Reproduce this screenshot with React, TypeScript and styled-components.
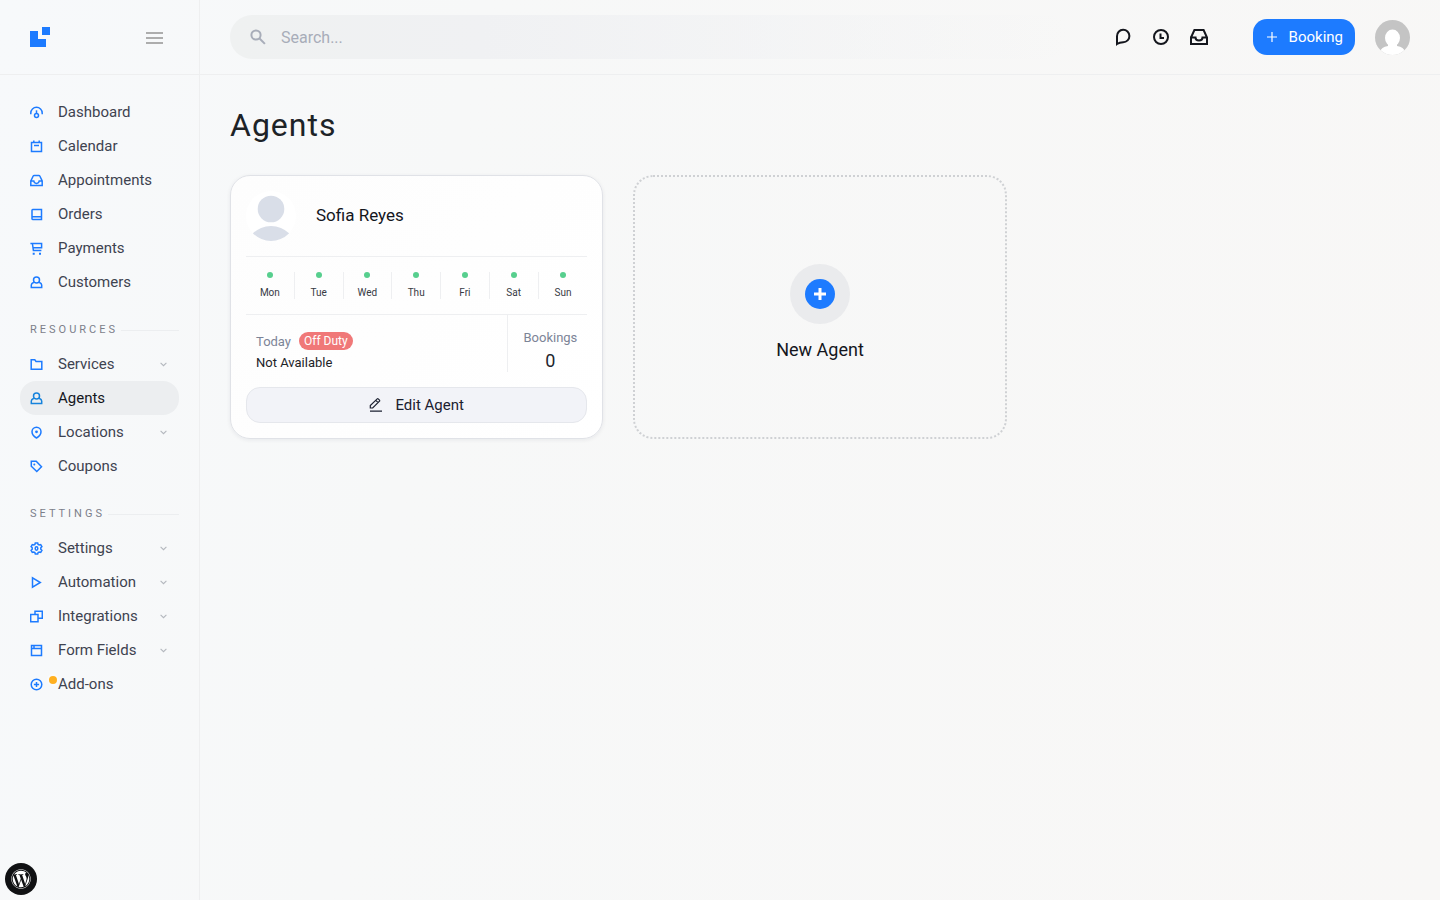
import React from "react";
import styled, { createGlobalStyle } from "styled-components";
import { FaWordpress } from "react-icons/fa";

const GlobalStyle = createGlobalStyle`
  *, *::before, *::after { box-sizing: border-box; }
  html, body, #root { min-height: 100vh; }
  body {
    margin: 0;
    color: #1d2327;
    font-family: Roboto, "Liberation Sans", sans-serif;
    font-size: 14px;
    background: linear-gradient(100deg, #f7f9fb 0%, #f7f8f8 30%, #f8f7f6 100%);
  }
  button, input { font: inherit; color: inherit; }
  button { cursor: pointer; }
  a { color: inherit; text-decoration: none; }
  svg { display: block; flex: none; }
`;

const Shell = styled.div`
  display: flex;
  min-height: 100vh;
`;

const Sidebar = styled.aside`
  flex: none;
  width: 200px;
  border-right: 1px solid #eeeff0;
`;

const Brand = styled.div`
  display: flex;
  align-items: center;
  justify-content: space-between;
  height: 75px;
  padding: 0 35px 0 30px;
  border-bottom: 1px solid #eeeff0;
`;

const IconButton = styled.button`
  display: flex;
  padding: 0;
  border: 0;
  background: none;
`;

const Nav = styled.nav`
  padding: 20px;
`;

const NavList = styled.ul`
  margin: 0;
  padding: 0;
  list-style: none;
`;

const NavLink = styled.a<{ $active?: boolean }>`
  display: flex;
  align-items: center;
  gap: 15px;
  height: 34px;
  padding: 0 12px 0 10px;
  border-radius: 16px;
  font-size: 15px;
  color: ${(p) => (p.$active ? "#14161d" : "#3e4350")};
  background: ${(p) => (p.$active ? "#eceef0" : "transparent")};

  > svg:first-child { color: ${(p) => (p.$active ? "#1683dc" : "#1d7bff")}; }
`;

const NavIconWrap = styled.span`
  position: relative;
  color: #1d7bff;
`;

const NoticeDot = styled.span`
  position: absolute;
  top: -4px;
  left: 17px;
  width: 12px;
  height: 12px;
  border: 2px solid #fafbfc;
  border-radius: 50%;
  background: #ffb020;
`;

const NavLabel = styled.span`
  flex: 1;
`;

const SectionTitle = styled.h2`
  display: flex;
  align-items: center;
  gap: 3px;
  margin: 0;
  padding: 22px 0 8px 10px;
  font-size: 11px;
  line-height: 18px;
  font-weight: 400;
  letter-spacing: 3px;
  text-transform: uppercase;
  color: #7c7f8a;

  &::after {
    content: "";
    flex: 1;
    height: 1px;
    background: #eceef0;
  }
`;

const Main = styled.main`
  flex: 1;
  min-width: 0;
`;

const TopBar = styled.header`
  display: flex;
  align-items: center;
  height: 75px;
  padding: 0 30px;
  border-bottom: 1px solid #eeeff0;
`;

const SearchBox = styled.label`
  flex: 1;
  display: flex;
  align-items: center;
  gap: 15px;
  height: 44px;
  margin-right: 45px;
  padding: 0 20px;
  border-radius: 22px;
  color: #a8adb9;
  background: linear-gradient(to right, #eff1f1, #f0f1f3 30%, rgba(243, 243, 243, 0));
`;

const SearchInput = styled.input`
  flex: 1;
  min-width: 0;
  padding: 0;
  border: 0;
  outline: 0;
  background: none;
  font-size: 16px;
  color: #1d2327;

  &::placeholder { color: #a8adb9; opacity: 1; }
`;

const Actions = styled.div`
  display: flex;
  align-items: center;
  gap: 20px;
  margin-right: 45px;
  color: #14161d;
`;

const BookingButton = styled.button`
  display: flex;
  align-items: center;
  gap: 12px;
  height: 36px;
  margin-right: 20px;
  padding: 0 12px 0 14px;
  border: 0;
  border-radius: 14px;
  font-size: 15px;
  color: #fff;
  background: #1d7bff;
`;

const Content = styled.div`
  padding: 30px;
`;

const PageTitle = styled.h1`
  margin: 0 0 30px;
  font-size: 32px;
  line-height: 40px;
  font-weight: 400;
  letter-spacing: 1px;
`;

const AgentGrid = styled.div`
  display: grid;
  grid-template-columns: repeat(3, 1fr);
  gap: 30px;
`;

const AgentCard = styled.article`
  padding: 15px;
  border: 1px solid #e0e2e7;
  border-radius: 20px;
  background: linear-gradient(315deg, #fff, #fdfdfd);
  box-shadow: 0 1px 4px rgba(20, 30, 60, 0.07);
`;

const AgentHeader = styled.div`
  display: flex;
  align-items: center;
  gap: 20px;
  padding-bottom: 15px;
  border-bottom: 1px solid #eeeff1;
`;

const AgentName = styled.h3`
  margin: 0;
  padding-bottom: 2px;
  font-size: 17px;
  line-height: 24px;
  font-weight: 400;
  color: #14161d;
`;

const Week = styled.ul`
  display: grid;
  grid-template-columns: repeat(7, 1fr);
  margin: 0;
  padding: 15px 0;
  border-bottom: 1px solid #eeeff1;
  list-style: none;
`;

const Day = styled.li`
  display: flex;
  flex-direction: column;
  align-items: center;
  gap: 8px;
  height: 27px;
  font-size: 10px;
  line-height: 14px;
  color: #373a44;

  &:not(:last-child) { border-right: 1px solid #eeeff1; }

  &::before {
    content: "";
    flex: none;
    width: 6px;
    height: 6px;
    border-radius: 50%;
    background: #57cf8e;
  }
`;

const Stats = styled.div`
  display: flex;
  margin-bottom: 15px;
`;

const Today = styled.div`
  flex: 1;
  padding: 17px 10px 0;
  font-size: 13px;
  color: #1d2327;
`;

const TodayRow = styled.div`
  display: flex;
  align-items: center;
  gap: 8px;
  height: 18px;
  color: #7c8497;
`;

const DutyBadge = styled.span`
  padding: 0 5px;
  border-radius: 9px;
  font-size: 12px;
  line-height: 18px;
  color: #fff;
  background: #f07878;
`;

const Availability = styled.div`
  padding-top: 4px;
  font-size: 13px;
  line-height: 18px;
`;

const Bookings = styled.div`
  height: 57px;
  padding: 14px 10px 0 15px;
  border-left: 1px solid #eeeff1;
  text-align: center;
  font-size: 13px;
  line-height: 18px;
  color: #7c8497;
`;

const BookingCount = styled.div`
  padding-top: 2px;
  font-size: 18px;
  line-height: 24px;
  color: #22252e;
`;

const EditButton = styled.button`
  display: flex;
  align-items: center;
  justify-content: center;
  gap: 12px;
  width: 100%;
  height: 36px;
  border: 1px solid #e5e7ec;
  border-radius: 14px;
  font-size: 15px;
  color: #1b2030;
  background: #f2f3f8;
`;

const NewAgentCard = styled.button`
  display: flex;
  flex-direction: column;
  align-items: center;
  justify-content: center;
  gap: 15px;
  padding: 10px 0 0;
  border: 2px dotted #cfd1d4;
  border-radius: 20px;
  font-size: 18px;
  line-height: 22px;
  color: #14161d;
  background: none;
`;

const AdminBadge = styled.a`
  position: fixed;
  left: 5px;
  bottom: 5px;
  display: flex;
  align-items: center;
  justify-content: center;
  width: 32px;
  height: 32px;
  border-radius: 50%;
  color: #fff;
  background: #101113;
`;

const glyphs: Record<string, React.ReactNode> = {
  dashboard: (
    <>
      <path d="M.8 8.2V7a5.7 5.7 0 0 1 11.4 0v1.2" />
      <circle cx="6.5" cy="9.4" r="2" />
      <path d="M6.5 4.3v3.2" />
    </>
  ),
  calendar: <path d="M1.5 2.5h10v9h-10zM3.8.5v2M9.2.5v2M4 5.500h5" />,
  inbox: <path d="M.8 7 3.2 2q.3-.6 1-.6h4.6q.7 0 1 .6l2.4 5v4.6H.8V7h3q.3 2.400 2.700 2.400T9.200 7h3" />,
  orders: <path d="M2.700 1.500h8.800v10H2.700q-.7 0-.7-.8V2.300q0-.8.7-.8M2 8.800h9.500" />,
  cart: (
    <>
      <path d="M.4 1.500h11.200V5.800H3.400M2.400 1.500l1 7h8" />
      <path d="M2.700 11.700h2M9 11.700h2" strokeWidth="2" />
    </>
  ),
  user: (
    <>
      <circle cx="6.5" cy="4" r="3" />
      <path d="M3.900 6.200Q1.300 7.200 1.300 9v2.500h10.400V9q0-1.800-2.600-2.800" />
    </>
  ),
  folder: <path d="M1.2 1.8h3.6L6 3.4h5.8v7.8H1.2z" />,
  pin: (
    <>
      <path d="M6.500 12C4 10.500 2 8.500 2 5.700a4.500 4.500 0 0 1 9 0C11 8.500 9 10.500 6.500 12z" />
      <circle cx="6.5" cy="5.8" r="1.4" fill="currentColor" stroke="none" />
    </>
  ),
  tag: (
    <>
      <path d="M1.300 1.300h4.900l5.300 5.500-4.700 4.700-5.500-5.300z" />
      <circle cx="4.300" cy="4.400" r="1" fill="currentColor" stroke="none" />
    </>
  ),
  gear: (
    <>
      <path d="M5.300.9h2.400l.4 1.500 1.100.6 1.500-.4 1.200 2-1.100 1.100v1.600l1.100 1.100-1.200 2-1.500-.4-1.100.6-.4 1.500H5.300l-.4-1.500-1.100-.6-1.500.4-1.200-2 1.100-1.100V5.700L1.100 4.600l1.200-2 1.500.4 1.100-.6z" />
      <ellipse cx="6.500" cy="6.500" rx="1.300" ry="1.700" />
    </>
  ),
  play: <path d="M2.500 1.900v9.200l7.800-4.600z" />,
  layers: <path d="M.7 4.500h7.300v7.200H.7zM5 4.500V1.300h7.300v7H8" />,
  form: <path d="M1.500 1.500h10v10h-10zM1.500 4.500h10M4 1.500v3" />,
  plus: (
    <>
      <circle cx="6.5" cy="6.5" r="5.3" />
      <path d="M6.500 3.900v5.200M3.900 6.500h5.200" />
    </>
  ),
};

const NavIcon = ({ name }: { name: string }) => (
  <svg width="13" height="13" viewBox="0 0 13 13" fill="none" stroke="currentColor" strokeWidth="1.5" aria-hidden="true">
    {glyphs[name]}
  </svg>
);

const Chevron = () => (
  <svg width="7" height="5" viewBox="0 0 7 5" fill="none" stroke="#b3b7bd" strokeWidth="1.1" aria-hidden="true">
    <path d="M.6.9 3.5 3.7 6.400.9" />
  </svg>
);

interface NavEntry {
  label: string;
  icon: string;
  expandable?: boolean;
  active?: boolean;
  notice?: boolean;
}

const sections: { title?: string; items: NavEntry[] }[] = [
  {
    items: [
      { label: "Dashboard", icon: "dashboard" },
      { label: "Calendar", icon: "calendar" },
      { label: "Appointments", icon: "inbox" },
      { label: "Orders", icon: "orders" },
      { label: "Payments", icon: "cart" },
      { label: "Customers", icon: "user" },
    ],
  },
  {
    title: "Resources",
    items: [
      { label: "Services", icon: "folder", expandable: true },
      { label: "Agents", icon: "user", active: true },
      { label: "Locations", icon: "pin", expandable: true },
      { label: "Coupons", icon: "tag" },
    ],
  },
  {
    title: "Settings",
    items: [
      { label: "Settings", icon: "gear", expandable: true },
      { label: "Automation", icon: "play", expandable: true },
      { label: "Integrations", icon: "layers", expandable: true },
      { label: "Form Fields", icon: "form", expandable: true },
      { label: "Add-ons", icon: "plus", notice: true },
    ],
  },
];

const days = ["Mon", "Tue", "Wed", "Thu", "Fri", "Sat", "Sun"];

export default function App() {
  return (
    <>
      <GlobalStyle />
      <Shell>
        <Sidebar>
          <Brand>
            <a href="#home" aria-label="Home">
              <svg width="20" height="20" viewBox="0 0 20 20" fill="#1d7bff">
                <path d="M0 4h8v8h8v8H0zM12 0h8v8h-8z" />
              </svg>
            </a>
            <IconButton aria-label="Toggle menu">
              <svg width="18" height="14" viewBox="0 0 18 14" stroke="#adadad" strokeWidth="2">
                <path d="M0 3h17M0 8h17M0 13h17" />
              </svg>
            </IconButton>
          </Brand>
          <Nav>
            {sections.map((section, i) => (
              <React.Fragment key={i}>
                {section.title && <SectionTitle>{section.title}</SectionTitle>}
                <NavList>
                  {section.items.map((item) => (
                    <li key={item.label}>
                      <NavLink href={"#" + item.icon} $active={item.active}>
                        {item.notice ? (
                          <NavIconWrap>
                            <NavIcon name={item.icon} />
                            <NoticeDot />
                          </NavIconWrap>
                        ) : (
                          <NavIcon name={item.icon} />
                        )}
                        <NavLabel>{item.label}</NavLabel>
                        {item.expandable && <Chevron />}
                      </NavLink>
                    </li>
                  ))}
                </NavList>
              </React.Fragment>
            ))}
          </Nav>
        </Sidebar>

        <Main>
          <TopBar>
            <SearchBox>
              <svg width="16" height="16" viewBox="0 0 16 16" fill="none" stroke="currentColor" strokeWidth="2">
                <circle cx="6" cy="6" r="4.6" />
                <path d="m9.300 9.300 5.600 5.600" />
              </svg>
              <SearchInput type="text" placeholder="Search..." aria-label="Search" />
            </SearchBox>
            <Actions>
              <IconButton aria-label="Messages">
                <svg width="18" height="18" viewBox="0 0 18 18" fill="none" stroke="currentColor" strokeWidth="2">
                  <path d="M3 16V8.200A6.200 6.200 0 1 1 9.200 14.200Q5.500 14.300 3 16z" />
                </svg>
              </IconButton>
              <IconButton aria-label="Activity">
                <svg width="18" height="18" viewBox="0 0 18 18" fill="none" stroke="currentColor" strokeWidth="2">
                  <circle cx="9" cy="9" r="7" />
                  <path d="M8.500 5.500V10H12" />
                </svg>
              </IconButton>
              <IconButton aria-label="Inbox">
                <svg width="18" height="18" viewBox="0 0 18 18" fill="none" stroke="currentColor" strokeWidth="2">
                  <path d="M1 9.500 4.400 2h9.200L17 9.500V16H1V9.500h4.500q0 3 3.500 3t3.500-3H17" />
                </svg>
              </IconButton>
            </Actions>
            <BookingButton>
              <svg width="10" height="10" viewBox="0 0 10 10" stroke="#fff" strokeWidth="1.2">
                <path d="M5 0v10M0 5h10" />
              </svg>
              Booking
            </BookingButton>
            <IconButton aria-label="Account">
              <svg width="35" height="35" viewBox="0 0 35 35">
                <clipPath id="account-clip">
                  <circle cx="17.5" cy="17.5" r="17.5" />
                </clipPath>
                <g clipPath="url(#account-clip)">
                  <rect width="35" height="35" fill="#c4c4c4" />
                  <ellipse cx="17.5" cy="18" rx="7.5" ry="8.5" fill="#fff" />
                  <path d="M13 23h9v3q7 1 8 6v4H5v-4q1-5 8-6z" fill="#fff" />
                </g>
              </svg>
            </IconButton>
          </TopBar>

          <Content>
            <PageTitle>Agents</PageTitle>
            <AgentGrid>
              <AgentCard>
                <AgentHeader>
                  <svg width="50" height="50" viewBox="0 0 50 50" aria-hidden="true">
                    <clipPath id="agent-clip">
                      <circle cx="25" cy="25" r="25" />
                    </clipPath>
                    <g clipPath="url(#agent-clip)">
                      <rect width="50" height="50" fill="#fff" />
                      <circle cx="25" cy="18" r="13.3" fill="#d9dee8" />
                      <circle cx="25" cy="61" r="26" fill="#d9dee8" />
                    </g>
                  </svg>
                  <AgentName>Sofia Reyes</AgentName>
                </AgentHeader>
                <Week>
                  {days.map((day) => (
                    <Day key={day}>{day}</Day>
                  ))}
                </Week>
                <Stats>
                  <Today>
                    <TodayRow>
                      Today <DutyBadge>Off Duty</DutyBadge>
                    </TodayRow>
                    <Availability>Not Available</Availability>
                  </Today>
                  <Bookings>
                    Bookings
                    <BookingCount>0</BookingCount>
                  </Bookings>
                </Stats>
                <EditButton>
                  <svg width="14" height="14" viewBox="0 0 14 14" fill="none" stroke="currentColor" strokeWidth="1.2">
                    <path d="M1.300 10V7.600L8.200.9q.5-.4 1 0l1.300 1.300q.4.5 0 1L3.700 10zM6.800 2.300l2.300 2.300M1 13.200h12" />
                  </svg>
                  Edit Agent
                </EditButton>
              </AgentCard>

              <NewAgentCard>
                <svg width="60" height="60" viewBox="0 0 60 60" aria-hidden="true">
                  <circle cx="30" cy="30" r="30" fill="#eaebed" />
                  <circle cx="30" cy="30" r="15" fill="#1d7bff" />
                  <path d="M30 24v12M24 30h12" stroke="#fff" strokeWidth="3" />
                </svg>
                New Agent
              </NewAgentCard>
            </AgentGrid>
          </Content>
        </Main>
      </Shell>
      <AdminBadge href="#wordpress" aria-label="WordPress">
        <FaWordpress size={20} />
      </AdminBadge>
    </>
  );
}
